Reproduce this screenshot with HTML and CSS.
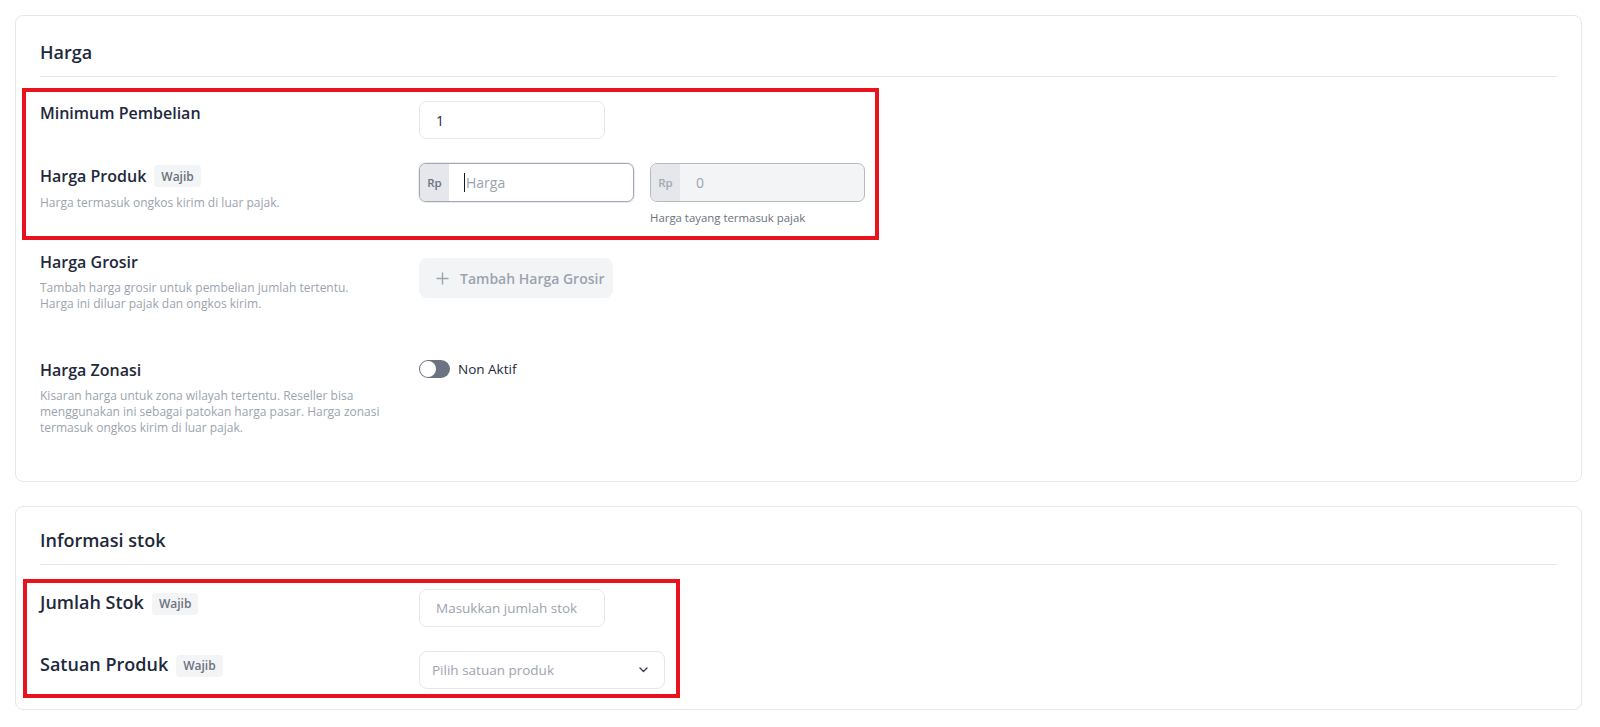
FILE: index.html
```html
<!DOCTYPE html>
<html lang="id">
<head>
<meta charset="utf-8">
<title>Harga &amp; Informasi stok</title>
<link rel="stylesheet" href="styles.css">
</head>
<body>
<div class="page">
  <section class="card card--price">
    <h2 class="card-title">Harga</h2>
    <div class="rows">
      <div class="row">
        <div class="row-label">
          <div class="label-line"><span class="label">Minimum Pembelian</span></div>
        </div>
        <div class="row-field">
          <div class="input input--qty"><span class="value">1</span></div>
        </div>
      </div>

      <div class="row">
        <div class="row-label">
          <div class="label-line label-line--badge"><span class="label">Harga Produk</span><span class="badge">Wajib</span></div>
          <p class="desc">Harga termasuk ongkos kirim di luar pajak.</p>
        </div>
        <div class="row-field">
          <div class="price-fields">
            <div class="price-col">
              <div class="input-group input-group--focus">
                <span class="prefix">Rp</span>
                <span class="group-body"><span class="caret"></span><span class="placeholder">Harga</span></span>
              </div>
            </div>
            <div class="price-col">
              <div class="input-group input-group--disabled">
                <span class="prefix">Rp</span>
                <span class="group-body"><span class="placeholder">0</span></span>
              </div>
              <p class="helper">Harga tayang termasuk pajak</p>
            </div>
          </div>
        </div>
      </div>

      <div class="row row--spaced">
        <div class="row-label">
          <div class="label-line"><span class="label">Harga Grosir</span></div>
          <p class="desc">Tambah harga grosir untuk pembelian jumlah tertentu.<br>Harga ini diluar pajak dan ongkos kirim.</p>
        </div>
        <div class="row-field">
          <button class="btn-add" type="button">
            <svg class="plus" width="13" height="13" viewBox="0 0 13 13" aria-hidden="true"><path d="M6.5 0.5v12M0.5 6.5h12" stroke="#9ca3af" stroke-width="1.4" fill="none"/></svg>
            <span class="btn-text">Tambah Harga Grosir</span>
          </button>
        </div>
      </div>

      <div class="row">
        <div class="row-label">
          <div class="label-line"><span class="label">Harga Zonasi</span></div>
          <p class="desc">Kisaran harga untuk zona wilayah tertentu. Reseller bisa<br>menggunakan ini sebagai patokan harga pasar. Harga zonasi<br>termasuk ongkos kirim di luar pajak.</p>
        </div>
        <div class="row-field">
          <div class="toggle-wrap">
            <span class="toggle"><span class="knob"></span></span>
            <span class="toggle-text">Non Aktif</span>
          </div>
        </div>
      </div>
    </div>
  </section>

  <section class="card card--stock">
    <h2 class="card-title">Informasi stok</h2>
    <div class="rows">
      <div class="row">
        <div class="row-label">
          <div class="label-line label-line--lg"><span class="label label--lg">Jumlah Stok</span><span class="badge badge--low">Wajib</span></div>
        </div>
        <div class="row-field">
          <div class="input input--qty"><span class="placeholder">Masukkan jumlah stok</span></div>
        </div>
      </div>
      <div class="row">
        <div class="row-label">
          <div class="label-line label-line--lg"><span class="label label--lg">Satuan Produk</span><span class="badge badge--low">Wajib</span></div>
        </div>
        <div class="row-field">
          <div class="select">
            <span class="placeholder">Pilih satuan produk</span>
            <svg class="chevron" width="9" height="6" viewBox="0 0 9 6" aria-hidden="true"><path d="M1 1l3.5 3.5L8 1" stroke="#374151" stroke-width="1.4" fill="none" stroke-linecap="round" stroke-linejoin="round"/></svg>
          </div>
        </div>
      </div>
    </div>
  </section>

  <div class="annot annot--price"></div>
  <div class="annot annot--stock"></div>
</div>
</body>
</html>
```

FILE: styles.css
```css
* {
  box-sizing: border-box;
  margin: 0;
  padding: 0;
}

html, body {
  background: #ffffff;
}

body {
  font-family: "Open Sans", "Noto Sans", sans-serif;
  color: #1e293b;
}

.page {
  position: relative;
  padding: 15px 18px 0 15px;
  display: flex;
  flex-direction: column;
  gap: 24px;
}

.card {
  border: 1px solid #e5e7eb;
  border-radius: 8px;
  padding: 24px;
}

.card--price .rows {
  padding-bottom: 21px;
}

.card--stock {
  padding: 21px 24px 20px;
}

.card-title {
  font-size: 18px;
  line-height: 24px;
  font-weight: 600;
  color: #1e293b;
  padding-bottom: 12px;
  border-bottom: 1px solid #e5e7eb;
}

.rows {
  margin-top: 24px;
  display: flex;
  flex-direction: column;
  gap: 24px;
}

.row {
  display: grid;
  grid-template-columns: 379px 1fr;
  align-items: start;
}

.row--spaced {
  margin-bottom: 22px;
}

.label-line {
  display: flex;
  align-items: center;
  gap: 8px;
}

.label-line--badge {
  min-height: 26px;
}

.label-line--lg {
  min-height: 26px;
}

.label {
  font-size: 16px;
  line-height: 24px;
  font-weight: 600;
  color: #1e293b;
}

.label--lg {
  font-size: 18px;
}

.badge {
  display: inline-flex;
  align-items: center;
  height: 22px;
  padding: 0 7px;
  border-radius: 4px;
  background: #f3f4f6;
  color: #6b7280;
  font-size: 12px;
  font-weight: 600;
}

.badge--low {
  margin-top: 3px;
}

.desc {
  margin-top: 6px;
  font-size: 12px;
  line-height: 16px;
  color: #9ca3af;
}

.input {
  height: 38px;
  border: 1px solid #e5e7eb;
  border-radius: 8px;
  padding: 0 16px;
  display: flex;
  align-items: center;
  font-size: 14px;
  color: #1e293b;
}

.input--qty {
  width: 186px;
}

.value {
  font-size: 14px;
  color: #1e293b;
}

.placeholder {
  font-size: 13.5px;
  color: #9ca3af;
  white-space: nowrap;
}

.price-fields {
  display: flex;
  gap: 16px;
}

.price-col {
  display: flex;
  flex-direction: column;
  gap: 8px;
  width: 215px;
}

.input-group {
  height: 39px;
  display: flex;
  border: 1px solid #a3a8b4;
  border-radius: 7px;
  overflow: hidden;
  background: #ffffff;
}

.input-group--focus {
  box-shadow: 0 0 0 1px #e8ebf3;
}

.input-group--disabled {
  background: #f3f4f6;
  border-color: #b5b9c2;
}

.input-group .placeholder {
  font-size: 14px;
}

.prefix {
  width: 29px;
  flex: none;
  display: flex;
  align-items: center;
  justify-content: center;
  background: #e5e7eb;
  font-size: 11.5px;
  font-weight: 600;
  color: #6b7280;
}

.input-group--disabled .prefix {
  color: #a3a8b3;
}

.group-body {
  flex: 1;
  display: flex;
  align-items: center;
  padding-left: 15px;
}

.input-group--disabled .group-body {
  padding-left: 16px;
}

.caret {
  width: 1px;
  height: 19px;
  background: #111827;
  margin-right: 1px;
}

.helper {
  font-size: 11.4px;
  line-height: 16px;
  color: #6b7280;
  white-space: nowrap;
}

.btn-add {
  margin-top: 8px;
  width: 194px;
  height: 40px;
  border: none;
  border-radius: 8px;
  background: #f3f4f6;
  display: flex;
  align-items: center;
  gap: 11px;
  padding: 0 17px;
  font-family: inherit;
  font-size: 14px;
  font-weight: 600;
  color: #9ca3af;
}

.btn-text {
  white-space: nowrap;
}

.plus {
  flex: none;
}

.toggle-wrap {
  display: flex;
  align-items: center;
  gap: 8px;
  padding-top: 1px;
}

.toggle {
  position: relative;
  width: 31px;
  height: 18px;
  border-radius: 9px;
  background: #6b7280;
  flex: none;
}

.knob {
  position: absolute;
  left: 1px;
  top: 1px;
  width: 16px;
  height: 16px;
  border-radius: 50%;
  background: #ffffff;
}

.toggle-text {
  font-size: 13.5px;
  line-height: 20px;
  color: #1e293b;
}

.select {
  width: 246px;
  height: 38px;
  border: 1px solid #e5e7eb;
  border-radius: 8px;
  padding: 0 16px 0 12px;
  display: flex;
  align-items: center;
  justify-content: space-between;
}

.chevron {
  flex: none;
}

.annot {
  position: absolute;
  border: 4px solid #e8131c;
  pointer-events: none;
}

.annot--price {
  left: 22px;
  top: 88px;
  width: 857px;
  height: 152px;
}

.annot--stock {
  left: 23px;
  top: 579px;
  width: 657px;
  height: 119px;
}
```
